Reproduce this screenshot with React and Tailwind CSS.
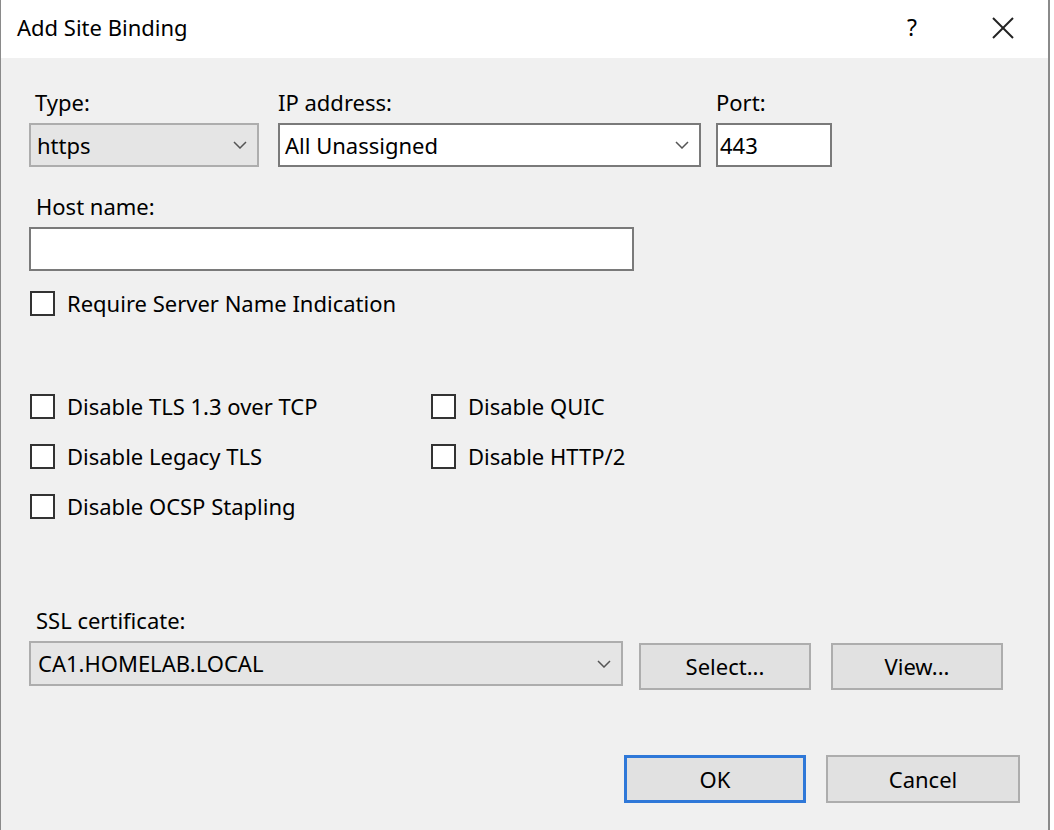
import React from "react";

const font = { fontFamily: '"Noto Sans", "Open Sans", sans-serif' };

function Chevron() {
  return (
    <svg width="14" height="8" viewBox="0 0 14 8" className="shrink-0">
      <polyline points="1,1 7,7 13,1" fill="none" stroke="#555" strokeWidth="1.5" />
    </svg>
  );
}

function Check({ label, className = "" }) {
  return (
    <div className={"flex items-center h-[28px] " + className}>
      <div className="w-[25px] h-[25px] border-2 border-[#333] bg-white shrink-0" />
      <span className="ml-[12px] leading-none">{label}</span>
    </div>
  );
}

export default function App() {
  return (
    <div className="w-[1054px] h-[830px] bg-white flex text-[22px] text-black" style={font}>
      <div className="w-[1050px] h-full border-l border-r-2 border-[#8a8a8a] flex flex-col">
        <div className="h-[58px] bg-white flex items-center pl-[16px] pb-[3px] shrink-0">
          <span className="flex-1">Add Site Binding</span>
          <span className="mr-[75px] text-[23px]">?</span>
          <svg width="22" height="22" viewBox="0 0 22 22" className="mr-[34px]">
            <line x1="1" y1="1" x2="21" y2="21" stroke="#222" strokeWidth="2" />
            <line x1="21" y1="1" x2="1" y2="21" stroke="#222" strokeWidth="2" />
          </svg>
        </div>
        <div className="flex-1 bg-[#f0f0f0] pl-[27px] flex flex-col">
          {/* Row 1 */}
          <div className="flex mt-[30px]">
            <div className="flex flex-col w-[230px] ml-[1px]">
              <div className="h-[28px] flex items-center pl-[6px]">Type:</div>
              <div className="mt-[7px] h-[44px] bg-[#e5e5e5] border-2 border-[#adadad] flex items-center pl-[6px] pr-[10px]">
                <span className="flex-1">https</span>
                <Chevron />
              </div>
            </div>
            <div className="flex flex-col w-[423px] ml-[19px]">
              <div className="h-[28px] flex items-center">IP address:</div>
              <div className="mt-[7px] h-[44px] bg-white border-2 border-[#7a7a7a] flex items-center pl-[5px] pr-[10px]">
                <span className="flex-1">All Unassigned</span>
                <Chevron />
              </div>
            </div>
            <div className="flex flex-col w-[116px] ml-[15px]">
              <div className="h-[28px] flex items-center">Port:</div>
              <div className="mt-[7px] h-[44px] bg-white border-2 border-[#7a7a7a] flex items-center pl-[2px]">
                443
              </div>
            </div>
          </div>
          {/* Host name */}
          <div className="h-[28px] flex items-center pl-[8px] mt-[25px]">Host name:</div>
          <div className="mt-[7px] h-[44px] w-[605px] bg-white border-2 border-[#7a7a7a] ml-[1px]" />
          <Check label="Require Server Name Indication" className="mt-[18px] ml-[2px]" />
          {/* Disable options */}
          <div className="grid grid-cols-[401px_auto] mt-[75px] ml-[2px] gap-y-[22px]">
            <Check label="Disable TLS 1.3 over TCP" />
            <Check label="Disable QUIC" />
            <Check label="Disable Legacy TLS" />
            <Check label="Disable HTTP/2" />
            <Check label="Disable OCSP Stapling" />
          </div>
          {/* SSL certificate */}
          <div className="h-[28px] flex items-center pl-[8px] mt-[86px]">SSL certificate:</div>
          <div className="flex items-start mt-[7px] ml-[1px]">
            <div className="w-[594px] h-[45px] bg-[#e5e5e5] border-2 border-[#adadad] flex items-center pl-[7px] pr-[10px]">
              <span className="flex-1">CA1.HOMELAB.LOCAL</span>
              <Chevron />
            </div>
            <button className="ml-[16px] mt-[2px] w-[172px] h-[47px] bg-[#e1e1e1] border-2 border-[#adadad] flex items-center justify-center">
              Select...
            </button>
            <button className="ml-[20px] mt-[2px] w-[172px] h-[47px] bg-[#e1e1e1] border-2 border-[#adadad] flex items-center justify-center">
              View...
            </button>
          </div>
          {/* OK / Cancel */}
          <div className="flex mt-[65px] ml-[596px]">
            <button className="w-[182px] h-[48px] bg-[#e1e1e1] border-[3px] border-[#2f78d8] flex items-center justify-center">
              OK
            </button>
            <button className="ml-[20px] w-[194px] h-[48px] bg-[#e1e1e1] border-2 border-[#adadad] flex items-center justify-center">
              Cancel
            </button>
          </div>
        </div>
      </div>
    </div>
  );
}
